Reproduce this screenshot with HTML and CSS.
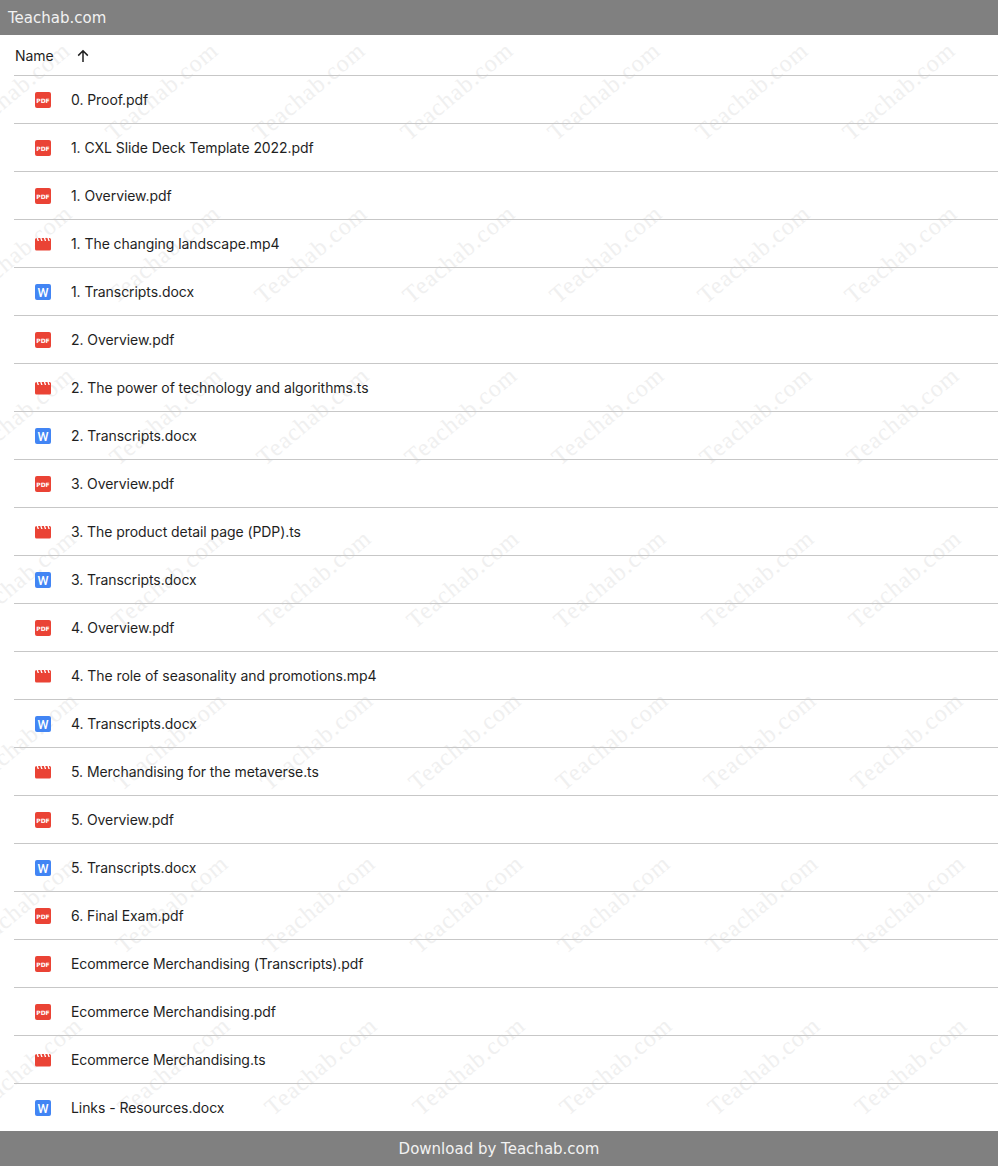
FILE: index.html
```html
<!DOCTYPE html>
<html lang="en">
<head>
<meta charset="utf-8">
<title>Teachab.com</title>
<link rel="stylesheet" href="styles.css">
</head>
<body>
<svg class="defs" width="0" height="0" aria-hidden="true">
  <symbol id="i-pdf" viewBox="0 0 16 16">
    <rect width="16" height="16" rx="2" fill="#ea4335"/>
    <text x="8" y="10.6" text-anchor="middle" font-family="DejaVu Sans, sans-serif" font-weight="700" font-size="6" fill="#fff">PDF</text>
  </symbol>
  <symbol id="i-film" viewBox="0 0 16 16">
    <path fill="#ea4335" d="M0 3.5 A1.5 1.5 0 0 1 1.5 2 H14.5 A1.5 1.5 0 0 1 16 3.5 V13 A1.5 1.5 0 0 1 14.5 14.5 H1.5 A1.5 1.5 0 0 1 0 13 Z"/>
    <path fill="#fff" d="M1.6 2 H3 L4 5 H2.6 Z M5.2 2 H6.6 L7.6 5 H6.2 Z M8.8 2 H10.2 L11.2 5 H9.8 Z M12.4 2 H13.8 L14.8 5 H13.4 Z"/>
  </symbol>
  <symbol id="i-word" viewBox="0 0 16 16">
    <rect width="16" height="16" rx="2" fill="#4285f4"/>
    <text x="8" y="12.6" text-anchor="middle" font-family="Roboto, sans-serif" font-weight="500" font-size="12.5" fill="#fff">W</text>
  </symbol>
</svg>

<header class="bar bar-top">Teachab.com</header>

<main class="list">
  <div class="watermarks" aria-hidden="true">
    <div class="wm-row"><span>Teachab.com</span><span>Teachab.com</span><span>Teachab.com</span><span>Teachab.com</span><span>Teachab.com</span><span>Teachab.com</span><span>Teachab.com</span></div>
    <div class="wm-row"><span>Teachab.com</span><span>Teachab.com</span><span>Teachab.com</span><span>Teachab.com</span><span>Teachab.com</span><span>Teachab.com</span><span>Teachab.com</span></div>
    <div class="wm-row"><span>Teachab.com</span><span>Teachab.com</span><span>Teachab.com</span><span>Teachab.com</span><span>Teachab.com</span><span>Teachab.com</span><span>Teachab.com</span></div>
    <div class="wm-row"><span>Teachab.com</span><span>Teachab.com</span><span>Teachab.com</span><span>Teachab.com</span><span>Teachab.com</span><span>Teachab.com</span><span>Teachab.com</span></div>
    <div class="wm-row"><span>Teachab.com</span><span>Teachab.com</span><span>Teachab.com</span><span>Teachab.com</span><span>Teachab.com</span><span>Teachab.com</span><span>Teachab.com</span></div>
    <div class="wm-row"><span>Teachab.com</span><span>Teachab.com</span><span>Teachab.com</span><span>Teachab.com</span><span>Teachab.com</span><span>Teachab.com</span><span>Teachab.com</span></div>
    <div class="wm-row"><span>Teachab.com</span><span>Teachab.com</span><span>Teachab.com</span><span>Teachab.com</span><span>Teachab.com</span><span>Teachab.com</span><span>Teachab.com</span></div>
  </div>

  <div class="head">
    <span>Name</span>
    <svg class="arrow" width="16" height="16" viewBox="0 0 16 16" aria-hidden="true"><path d="M8 14V3M3.2 7.6 8 2.8l4.8 4.8" fill="none" stroke="#1f1f1f" stroke-width="1.5"/></svg>
  </div>

  <div class="row"><svg class="icon"><use href="#i-pdf"/></svg><span>0. Proof.pdf</span></div>
  <div class="row"><svg class="icon"><use href="#i-pdf"/></svg><span>1. CXL Slide Deck Template 2022.pdf</span></div>
  <div class="row"><svg class="icon"><use href="#i-pdf"/></svg><span>1. Overview.pdf</span></div>
  <div class="row"><svg class="icon"><use href="#i-film"/></svg><span>1. The changing landscape.mp4</span></div>
  <div class="row"><svg class="icon"><use href="#i-word"/></svg><span>1. Transcripts.docx</span></div>
  <div class="row"><svg class="icon"><use href="#i-pdf"/></svg><span>2. Overview.pdf</span></div>
  <div class="row"><svg class="icon"><use href="#i-film"/></svg><span>2. The power of technology and algorithms.ts</span></div>
  <div class="row"><svg class="icon"><use href="#i-word"/></svg><span>2. Transcripts.docx</span></div>
  <div class="row"><svg class="icon"><use href="#i-pdf"/></svg><span>3. Overview.pdf</span></div>
  <div class="row"><svg class="icon"><use href="#i-film"/></svg><span>3. The product detail page (PDP).ts</span></div>
  <div class="row"><svg class="icon"><use href="#i-word"/></svg><span>3. Transcripts.docx</span></div>
  <div class="row"><svg class="icon"><use href="#i-pdf"/></svg><span>4. Overview.pdf</span></div>
  <div class="row"><svg class="icon"><use href="#i-film"/></svg><span>4. The role of seasonality and promotions.mp4</span></div>
  <div class="row"><svg class="icon"><use href="#i-word"/></svg><span>4. Transcripts.docx</span></div>
  <div class="row"><svg class="icon"><use href="#i-film"/></svg><span>5. Merchandising for the metaverse.ts</span></div>
  <div class="row"><svg class="icon"><use href="#i-pdf"/></svg><span>5. Overview.pdf</span></div>
  <div class="row"><svg class="icon"><use href="#i-word"/></svg><span>5. Transcripts.docx</span></div>
  <div class="row"><svg class="icon"><use href="#i-pdf"/></svg><span>6. Final Exam.pdf</span></div>
  <div class="row"><svg class="icon"><use href="#i-pdf"/></svg><span>Ecommerce Merchandising (Transcripts).pdf</span></div>
  <div class="row"><svg class="icon"><use href="#i-pdf"/></svg><span>Ecommerce Merchandising.pdf</span></div>
  <div class="row"><svg class="icon"><use href="#i-film"/></svg><span>Ecommerce Merchandising.ts</span></div>
  <div class="row"><svg class="icon"><use href="#i-word"/></svg><span>Links - Resources.docx</span></div>
</main>

<footer class="bar bar-bottom">Download by Teachab.com</footer>
</body>
</html>
```

FILE: styles.css
```css
* { box-sizing: border-box; }

html, body {
  margin: 0;
  padding: 0;
  background: #fff;
}

body {
  height: 1166px;
  overflow: hidden;
  display: flex;
  flex-direction: column;
  font-family: Inter, "Liberation Sans", sans-serif;
  color: #1f1f1f;
}

.defs { position: absolute; }

.bar {
  height: 35px;
  flex: none;
  display: flex;
  align-items: center;
  background: #808080;
  color: #f2f2f2;
  font-family: "DejaVu Sans", sans-serif;
  font-size: 15px;
  position: relative;
  z-index: 2;
}

.bar-top { padding-left: 8px; }
.bar-bottom { justify-content: center; }

.list {
  position: relative;
  flex: 1;
  overflow: hidden;
}

.watermarks {
  position: absolute;
  inset: 0;
  pointer-events: none;
  display: flex;
  flex-direction: column;
}

.wm-row {
  display: flex;
  flex: none;
  height: 162.5px;
  margin-left: -60px;
}

.wm-row:nth-child(2) { margin-left: -58px; }
.wm-row:nth-child(3) { margin-left: -56px; }
.wm-row:nth-child(4) { margin-left: -54px; }
.wm-row:nth-child(5) { margin-left: -52px; }
.wm-row:nth-child(6) { margin-left: -50px; }
.wm-row:nth-child(7) { margin-left: -48px; }

.wm-row span {
  flex: none;
  width: 147.5px;
  height: 112px;
  display: flex;
  align-items: center;
  justify-content: center;
  white-space: nowrap;
  font-family: "Liberation Serif", serif;
  font-size: 24px;
  letter-spacing: 1px;
  color: #f0f0f0;
  transform: rotate(-40deg);
}

.head {
  position: relative;
  height: 41px;
  margin-left: 14px;
  padding-left: 1px;
  padding-top: 1px;
  display: flex;
  align-items: center;
  gap: 21px;
  border-bottom: 1px solid #c7c7c7;
  font-size: 14px;
  letter-spacing: -0.06px;
}

.arrow { flex: none; }

.row {
  position: relative;
  height: 48px;
  margin-left: 14px;
  padding-left: 21px;
  display: flex;
  align-items: center;
  gap: 20px;
  border-bottom: 1px solid #c7c7c7;
  font-size: 14px;
  letter-spacing: -0.07px;
}

.row:last-child { border-bottom-color: transparent; }

.icon {
  flex: none;
  width: 16px;
  height: 16px;
}
```
